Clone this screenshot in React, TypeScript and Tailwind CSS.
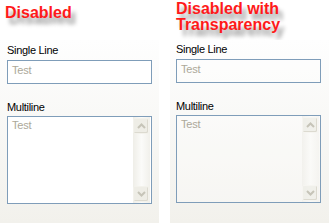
import React from "react";

const labelFont = { fontFamily: '"Liberation Sans", Arial, sans-serif' };

function Chevron({ up }: { up?: boolean }) {
  return (
    <svg width="9" height="6" viewBox="0 0 9 6" className="block">
      <polyline
        points={up ? "1,5 4.5,1.5 8,5" : "1,1 4.5,4.5 8,1"}
        fill="none"
        stroke="#c6c4b8"
        strokeWidth="2"
      />
    </svg>
  );
}

function ScrollButton({ up, faded }: { up?: boolean; faded?: boolean }) {
  return (
    <div
      className={`w-[16px] h-[16px] flex items-center justify-center rounded-[2px] border ${
        faded ? "border-[#f6f5f1] bg-[#eeede7]/80" : "border-[#f3f2ec] bg-[#eeede6]"
      } shadow-[inset_-1px_-1px_0_#dcdad0]`}
    >
      <Chevron up={up} />
    </div>
  );
}

function Panel({ title, faded }: { title: React.ReactNode; faded?: boolean }) {
  const boxBg = faded ? "bg-white/30" : "bg-white";
  return (
    <div className="w-[159px] h-full flex flex-col">
      <div
        className={`h-[40px] bg-white text-[16px] leading-[16px] font-bold text-[#ff1a1a] [text-shadow:4px_6px_4px_rgba(0,0,0,0.4)] ${
          faded ? "pl-[6px] pt-[1px]" : "pl-[5px] pt-[5px]"
        }`}
        style={{ fontFamily: '"Liberation Sans", Arial, sans-serif' }}
      >
        {title}
      </div>
      <div
        className={`flex-1 bg-gradient-to-b from-[#fefefe] to-[#f2f1ec] ${
          faded ? "pl-[6px] pr-[8px] pt-[3px]" : "pl-[7px] pr-[7px] pt-[4px]"
        }`}
        style={labelFont}
      >
        <div className="text-[11px] leading-[13px] tracking-[-0.3px] text-black">Single Line</div>
        <div
          className={`mt-[3px] h-[24px] border border-[#7f9db9] ${boxBg} pl-[4px] pt-[3px] text-[11px] leading-[13px] tracking-[-0.2px] text-[#aca899]`}
        >
          Test
        </div>
        <div className="mt-[17px] text-[11px] leading-[13px] tracking-[-0.3px] text-black">Multiline</div>
        <div className={`mt-[2px] h-[88px] border border-[#7f9db9] ${boxBg} flex`}>
          <div className="flex-1 pl-[4px] pt-[2px] text-[11px] leading-[13px] tracking-[-0.2px] text-[#aca899]">
            Test
          </div>
          <div
            className={`w-[17px] mr-[1px] flex flex-col justify-between py-[1px] ${
              faded
                ? "bg-gradient-to-r from-[#efeee9]/70 via-[#fbfbf9]/70 to-[#f3f2ee]/70"
                : "bg-gradient-to-r from-[#efeee8] via-[#fbfbf9] to-[#f1f0eb]"
            }`}
          >
            <ScrollButton up faded={faded} />
            <ScrollButton faded={faded} />
          </div>
        </div>
      </div>
    </div>
  );
}

export default function App() {
  return (
    <div className="w-[329px] h-[223px] bg-white flex overflow-hidden">
      <Panel title="Disabled" />
      <div className="w-[11px] h-full bg-white" />
      <Panel
        faded
        title={
          <>
            Disabled with
            <br />
            Transparency
          </>
        }
      />
    </div>
  );
}
